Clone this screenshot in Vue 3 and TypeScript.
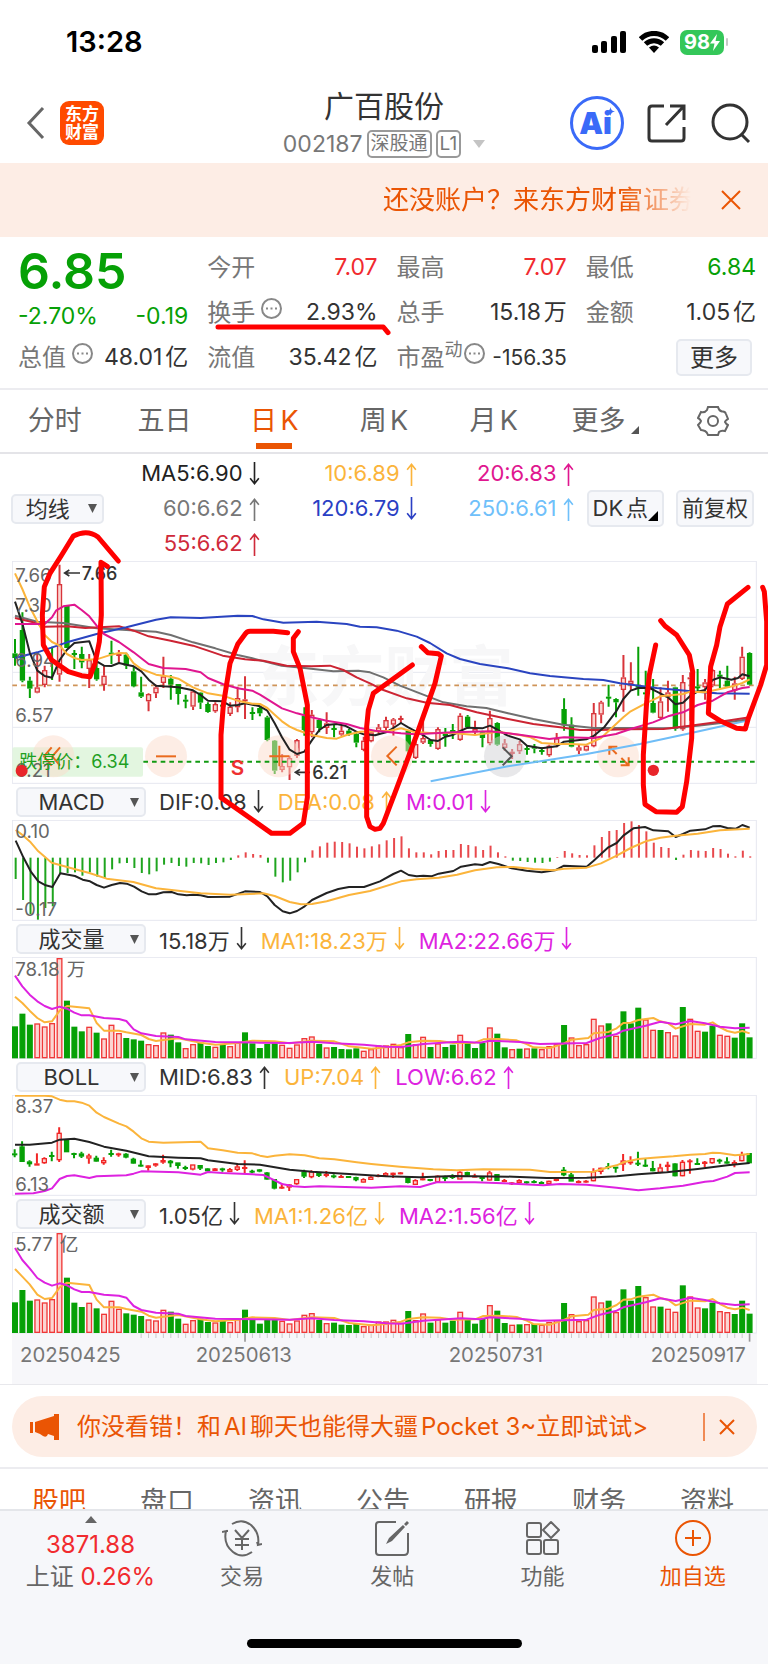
<script setup lang="ts">
import { ref } from 'vue'

type Candle = [up: number, high: number, top: number, bottom: number, low: number]

// Charts use a drawing grid of three units per CSS pixel.
const STEP = 22.26
const barX = (i: number): number => 45 + STEP * i

const candles: Candle[] = [
  [0, 255, 298, 312, 335], [0, 175, 228, 380, 385], [0, 368, 380, 404, 432], [1, 295, 400, 416, 418], [1, 335, 348, 393, 400],
  [0, 278, 315, 320, 378], [1, 32, 90, 362, 383], [0, 155, 155, 282, 282], [0, 288, 297, 301, 345], [0, 278, 300, 325, 343],
  [1, 300, 318, 345, 402], [0, 318, 342, 376, 380], [1, 335, 365, 393, 410], [0, 260, 296, 300, 330], [1, 288, 300, 305, 330],
  [0, 296, 302, 335, 345], [0, 338, 352, 397, 400], [0, 368, 415, 428, 432], [1, 418, 420, 442, 472], [1, 392, 400, 418, 432],
  [1, 308, 367, 387, 402], [0, 363, 374, 392, 437], [0, 390, 390, 420, 452], [0, 422, 437, 441, 463], [1, 410, 412, 458, 468],
  [0, 415, 416, 446, 465], [0, 445, 450, 474, 476], [1, 445, 450, 472, 476], [0, 440, 452, 458, 480], [1, 445, 458, 480, 486],
  [1, 398, 432, 460, 475], [1, 367, 436, 440, 495], [0, 460, 474, 480, 498], [0, 455, 462, 478, 487], [0, 485, 490, 558, 562],
  [0, 558, 560, 650, 660], [1, 600, 636, 648, 655], [1, 605, 612, 640, 678], [1, 555, 558, 606, 612], [0, 460, 485, 528, 545],
  [1, 468, 482, 535, 550], [0, 492, 498, 522, 535], [1, 475, 508, 522, 540], [0, 510, 522, 526, 550], [1, 515, 530, 542, 545],
  [0, 525, 530, 540, 545], [0, 532, 540, 566, 580], [1, 548, 560, 588, 592], [1, 530, 535, 562, 565], [1, 510, 520, 532, 540],
  [1, 488, 498, 522, 535], [1, 492, 496, 512, 545], [1, 485, 492, 498, 508], [0, 530, 530, 592, 600], [1, 560, 570, 612, 615],
  [1, 492, 552, 566, 570], [0, 555, 558, 570, 578], [1, 520, 525, 585, 587], [0, 522, 540, 544, 578], [0, 510, 528, 532, 555],
  [1, 478, 485, 558, 560], [0, 483, 488, 520, 525], [1, 500, 525, 535, 540], [0, 530, 535, 552, 580], [1, 470, 492, 568, 574],
  [0, 505, 507, 572, 575], [1, 555, 568, 582, 590], [1, 585, 593, 600, 615], [1, 560, 570, 592, 600], [0, 575, 582, 588, 602],
  [0, 570, 578, 584, 598], [0, 580, 588, 594, 602], [1, 572, 575, 604, 608], [1, 537, 553, 572, 580], [0, 433, 465, 514, 530],
  [0, 490, 512, 578, 580], [1, 570, 580, 590, 600], [1, 570, 575, 590, 592], [1, 447, 477, 577, 580], [1, 440, 445, 482, 508],
  [0, 392, 428, 432, 458], [0, 433, 435, 445, 490], [1, 303, 370, 408, 473], [1, 325, 380, 390, 410], [0, 278, 395, 400, 425],
  [0, 350, 415, 420, 435], [0, 375, 447, 476, 478], [1, 400, 442, 492, 497], [1, 380, 415, 430, 473], [0, 398, 400, 524, 530],
  [1, 363, 384, 526, 530], [1, 355, 370, 376, 500], [0, 345, 397, 401, 412], [1, 375, 385, 400, 437], [1, 345, 348, 395, 400],
  [0, 350, 362, 366, 402], [0, 335, 380, 398, 402], [1, 368, 388, 410, 437], [1, 278, 308, 375, 378], [0, 295, 297, 392, 394],
]

const bollY = (y: number): number => Math.round(222 + 0.2964 * (y - 90))
const bollCandles: Candle[] = candles.map(([u, h, t, b, l]) => [u, bollY(h), bollY(t), bollY(b), bollY(l)])

// One letter per trading day: r = rising, g = falling.
const volumeColors =
  'gggrrrrgggrgrrrgggrrrggrrggrgrrggggg' + 'rrrrrgrggggrrrrrrgrrgrgg' + 'rgggrggrgrgrrrgrrrrrgrgggrrgrrgrrggrrg'
const volumeTops: number[] = [
  727, 689, 722, 718, 727, 717, 522, 650, 728, 742, 728, 746, 763, 722, 747, 762, 766, 770, 780, 783,
  745, 752, 775, 792, 780, 775, 786, 788, 780, 786, 776, 745, 778, 792, 780, 778, 782, 791, 781, 762,
  757, 780, 790, 789, 795, 796, 793, 800, 795, 784, 784, 779, 789, 750, 780, 758, 789, 778, 789, 782,
  752, 777, 792, 777, 730, 749, 790, 795, 794, 793, 793, 795, 786, 780, 723, 760, 783, 780, 704, 724,
  718, 755, 682, 718, 671, 706, 737, 738, 744, 754, 669, 704, 740, 743, 725, 752, 755, 761, 718, 760,
]
interface Bar { x: number; y: number; h: number; up: boolean }
const isUp = (i: number): boolean => volumeColors[i] === 'r'
const volumeBars: Bar[] = volumeTops.map((y, i) => ({ x: barX(i), y, h: 822 - y, up: isUp(i) }))
const amountFactor = (i: number): number => (i === 6 ? 0.997 : i < 20 ? 0.96 : i < 78 ? 0.9 : 0.925)
const amountBars: Bar[] = volumeTops.map((y, i) => {
  const h = Math.round((822 - y) * amountFactor(i))
  return { x: barX(i), y: 821 - h, h, up: isUp(i) }
})

const macdEnds: number[] = [
  285, 348, 390, 407, 372, 367, 268, 267, 265, 275, 265, 278, 282, 256, 238, 237, 252, 267, 271, 262,
  242, 237, 246, 248, 237, 238, 243, 237, 235, 228, 214, 205, 210, 213, 236, 278, 295, 290, 265, 235,
  199, 187, 176, 173, 174, 178, 188, 193, 187, 181, 169, 162, 157, 193, 205, 205, 211, 201, 198, 198,
  180, 183, 187, 198, 185, 205, 217, 230, 231, 234, 236, 237, 233, 219, 201, 208, 213, 214, 184, 159,
  141, 138, 117, 112, 123, 142, 176, 189, 192, 228, 212, 198, 200, 201, 192, 195, 209, 217, 200, 217,
]

interface Line { color: string; points: string }
const maLines: Line[] = [
  { color: '#6fbdf7', points: '1292,682 1524,637 1760,600 1920,570 2060,540 2249,498' },
  { color: '#707070', points: '45,185 112,203 190,207 290,223 468,233 512,243 579,265 646,283 713,303 757,313 845,335 920,343 1000,352 1075,350 1110,355 1150,370 1200,395 1260,418 1330,445 1400,457 1459,462 1524,478 1600,495 1690,512 1780,522 1880,522 2010,523 2093,515 2182,505 2249,495' },
  { color: '#cc2433', points: '45,192 100,205 134,218 201,217 256,222 357,217 401,230 446,247 512,260 579,275 624,290 668,305 735,316 790,320 860,335 935,337 990,335 1030,348 1070,370 1110,388 1150,408 1220,433 1280,446 1350,453 1430,475 1524,495 1600,510 1680,520 1740,528 1800,528 1880,526 1990,525 2070,515 2160,503 2249,490' },
  { color: '#2a44c0', points: '45,312 112,295 201,265 290,240 379,220 468,197 512,190 602,192 713,185 757,186 790,196 850,206 950,203 1040,210 1080,218 1130,220 1190,230 1250,248 1290,267 1340,298 1380,315 1440,330 1524,343 1590,358 1650,366 1750,375 1810,378 1860,388 1970,402 2090,413 2150,418 2249,419' },
  { color: '#222222', points: '45,143 67,208 89,295 112,350 134,366 156,371 179,318 201,287 223,267 268,262 290,322 312,335 334,336 357,327 379,332 401,337 424,352 446,377 468,395 490,397 535,400 579,409 602,423 624,440 668,442 690,455 713,453 735,448 757,452 780,457 802,470 824,508 846,550 869,587 891,600 913,593 935,560 958,528 980,513 1010,510 1035,515 1069,533 1091,541 1125,544 1158,535 1180,522 1203,507 1225,520 1247,532 1269,543 1292,558 1314,561 1336,548 1358,543 1381,531 1403,521 1447,523 1470,515 1492,527 1514,540 1524,545 1559,556 1581,575 1625,583 1670,577 1692,563 1759,556 1781,546 1814,518 1848,473 1870,435 1892,410 1915,402 1949,402 1969,412 2004,430 2026,451 2049,446 2071,425 2093,413 2115,408 2138,378 2160,370 2194,377 2214,372 2227,361 2249,367' },
  { color: '#fbb43b', points: '45,58 67,105 89,158 112,202 134,243 156,264 179,275 201,300 223,312 245,318 290,316 334,302 357,297 379,298 401,328 424,345 468,362 512,368 535,374 579,400 624,418 668,425 713,440 757,449 780,450 802,462 824,482 846,502 869,518 891,528 935,543 980,552 1010,554 1040,543 1080,533 1125,532 1170,530 1203,523 1240,533 1290,537 1358,537 1425,543 1492,533 1559,543 1592,550 1625,567 1670,570 1714,570 1759,572 1803,552 1825,532 1870,490 1892,472 1937,448 1981,427 2026,422 2049,420 2071,413 2115,415 2160,405 2204,395 2227,387 2249,376' },
  { color: '#e0168f', points: '45,210 134,210 156,190 168,170 190,157 223,152 245,168 268,187 290,215 312,240 357,264 401,295 446,330 490,342 557,345 602,355 624,372 668,390 713,403 757,410 780,422 846,463 891,478 935,490 980,500 1040,510 1080,522 1125,530 1203,538 1247,541 1358,535 1470,532 1559,542 1648,555 1692,550 1781,552 1848,540 1892,525 1959,505 2004,487 2049,475 2093,453 2138,440 2182,415 2227,402 2249,399' },
]

const macdLines: Line[] = [
  { color: '#222222', points: '47,170 70,220 92,262 115,292 137,304 157,309 181,268 225,276 248,287 270,292 290,303 312,311 335,303 360,297 380,299 402,308 425,322 447,331 468,331 490,325 515,324 535,331 560,334 580,332 602,334 624,339 690,338 735,322 780,324 802,337 824,363 848,382 869,388 891,381 914,367 936,348 980,327 1015,315 1047,309 1092,309 1140,292 1180,270 1203,260 1226,273 1250,277 1270,275 1294,277 1316,269 1360,261 1383,248 1425,241 1447,243 1470,234 1495,240 1535,253 1580,260 1625,265 1665,259 1692,245 1760,248 1781,230 1803,210 1825,190 1850,177 1870,155 1900,133 1935,129 1960,139 2005,142 2027,159 2049,150 2071,140 2115,136 2138,127 2160,126 2182,132 2208,134 2227,123 2249,131' },
  { color: '#fbb43b', points: '47,138 70,155 92,175 115,202 155,236 223,255 268,267 320,284 400,294 468,313 535,320 602,328 690,332 790,328 824,336 869,354 903,361 936,360 980,352 1047,333 1110,321 1203,292 1250,286 1316,281 1371,272 1425,259 1490,250 1540,249 1600,255 1660,259 1692,254 1760,251 1803,238 1850,215 1892,192 1937,172 1981,161 2027,155 2093,149 2160,139 2249,134' },
]

const volumeLines: Line[] = [
  { color: '#fbb43b', points: '45,638 67,657 89,680 112,702 134,715 156,712 179,680 201,666 268,673 290,717 312,740 357,740 379,745 424,753 446,765 468,771 490,768 535,763 602,776 646,782 713,777 757,770 824,772 869,778 936,770 1003,772 1047,787 1114,794 1158,790 1203,783 1225,775 1270,770 1320,771 1360,777 1425,776 1450,766 1495,765 1550,769 1580,780 1600,790 1650,792 1692,778 1714,767 1765,762 1781,748 1825,744 1850,733 1870,717 1892,716 1915,708 1960,702 1981,712 2005,718 2027,734 2071,720 2115,722 2138,715 2160,730 2182,741 2205,746 2227,741 2249,748' },
  { color: '#dd22e0', points: '45,575 67,607 89,632 112,652 134,666 156,675 179,668 201,674 223,686 245,694 268,694 312,702 357,705 379,711 401,736 424,748 468,756 535,759 557,766 646,774 780,776 869,777 936,773 1003,778 1092,782 1158,788 1203,789 1270,780 1350,775 1383,773 1440,776 1470,770 1560,774 1620,780 1760,777 1800,762 1850,750 1870,740 1937,725 1981,713 2027,721 2071,711 2115,718 2160,728 2205,733 2249,731' },
]
const amountLines: Line[] = volumeLines.map((line) => ({
  color: line.color,
  points: line.points
    .split(' ')
    .map((p) => {
      const [x, y] = p.split(',').map(Number)
      const dy = x < 60 ? -8 : x < 90 ? -4 : 5
      return `${x},${y + dy}`
    })
    .join(' '),
}))

const bollLines: Line[] = [
  { color: '#fbb43b', points: '45,110 134,110 156,112 179,122 201,127 223,127 245,131 268,140 290,161 312,174 357,194 379,202 401,218 424,238 446,248 490,251 602,248 624,268 668,274 713,281 757,283 780,290 802,294 824,290 869,286 914,289 958,298 1003,301 1070,310 1114,315 1200,323 1300,331 1370,334 1450,331 1590,332 1650,339 1780,338 1825,325 1850,319 1870,310 1915,300 1960,296 2020,292 2071,287 2115,285 2138,281 2160,282 2205,289 2249,285' },
  { color: '#222222', points: '45,257 89,257 156,251 179,242 223,239 268,249 312,263 379,275 446,292 535,296 602,298 624,304 713,315 780,317 869,332 936,338 1047,345 1158,352 1260,355 1360,351 1540,353 1640,357 1760,356 1850,352 1915,346 2000,340 2093,330 2182,319 2249,312' },
  { color: '#dd22e0', points: '45,404 100,403 134,396 156,388 179,360 201,351 223,349 268,357 290,352 379,349 401,344 424,337 535,340 602,347 624,339 668,342 757,346 790,348 824,364 846,375 880,382 914,384 958,382 1114,386 1200,382 1260,384 1310,370 1425,370 1540,374 1630,379 1680,375 1760,377 1850,386 1915,394 1980,388 2049,380 2115,368 2140,366 2182,353 2205,342 2249,340' },
]

const priceLabels = [
  { y: 84, text: '7.66' }, { y: 173, text: '7.30' }, { y: 340, text: '6.94' }, { y: 505, text: '6.57' }, { y: 670, text: '6.21' },
]
const ticks = Array.from({ length: 83 }, (_, k) => k + 17)
const dates = [
  { x: 60, text: '20250425' }, { x: 587, text: '20250613' }, { x: 1346, text: '20250731' }, { x: 1952, text: '20250917' },
]

const periods = ['分时', '五日', '日K', '周K', '月K', '更多']
const activePeriod = ref('日K')

const averages = [
  { text: 'MA5:6.90', dir: 'down', tone: 'ink' }, { text: '10:6.89', dir: 'up', tone: 'gold' }, { text: '20:6.83', dir: 'up', tone: 'pink' },
  { text: '60:6.62', dir: 'up', tone: 'gray' }, { text: '120:6.79', dir: 'down', tone: 'navy' }, { text: '250:6.61', dir: 'up', tone: 'sky' },
  { text: '55:6.62', dir: 'up', tone: 'crimson' },
]

const indicators = ['MACD', '成交量', 'BOLL', '成交额']
const macdPick = ref('MACD')
const volumePick = ref('成交量')
const bollPick = ref('BOLL')
const amountPick = ref('成交额')
const overlayPick = ref('均线')

const sections = ['股吧', '盘口', '资讯', '公告', '研报', '财务', '资料']
const arrowPath = (dir: string): string => (dir === 'up' ? 'M6 22V2M2 7L6 2L10 7' : 'M6 0V20M2 15L6 20L10 15')
</script>

<template>
  <div class="page">
    <div class="status">
      <span class="clock">13:28</span>
      <span class="status-icons">
        <svg width="35" height="22" viewBox="0 0 35 22"><rect x="0" y="14" width="6" height="8" rx="2" /><rect x="9" y="10" width="6" height="12" rx="2" /><rect x="19" y="5" width="6" height="17" rx="2" /><rect x="28" y="0" width="6" height="22" rx="2" /></svg>
        <svg class="wifi" width="30" height="22" viewBox="0 0 30 22"><path d="M1.500 8C9 0.500 21 0.500 28.500 8" /><path d="M6.500 13C11.500 8.500 18.500 8.500 23.500 13" /><path class="solid" d="M10 16.500Q15 12.500 20 16.500L15 22Z" /></svg>
        <span class="battery">98<svg width="10" height="17" viewBox="0 0 10 17"><path d="M7 0L0 9.500H4.500L3 17L10 7H5.500Z" /></svg></span><i class="battery-tip"></i>
      </span>
    </div>

    <header class="header">
      <div class="header-left">
        <button class="plain" aria-label="返回"><svg width="20" height="34" viewBox="0 0 20 34"><path d="M17 2L3 17L17 32" fill="none" stroke="#666" stroke-width="3" /></svg></button>
        <a class="brand" href="#">东方<br />财富</a>
      </div>
      <div class="title">
        <h1>广百股份</h1>
        <p><span class="code">002187</span><span class="tag">深股通</span><span class="tag">L1</span><svg width="12" height="8" viewBox="0 0 12 8"><path d="M0 0H12L6 8Z" fill="#c4c4c4" /></svg></p>
      </div>
      <div class="header-right">
        <button class="ai" aria-label="Ai"><span>Ai</span><svg width="9" height="9" viewBox="0 0 10 10"><path d="M5 0Q5.500 4.500 10 5Q5.500 5.500 5 10Q4.500 5.500 0 5Q4.500 4.500 5 0Z" /></svg></button>
        <button class="plain" aria-label="分享"><svg width="40" height="40" viewBox="0 0 40 40" fill="none" stroke="#333" stroke-width="3"><path d="M17 3H5Q2 3 2 6V35Q2 38 5 38H34Q37 38 37 35V24M23 3H37V17M37 3L19 22" /></svg></button>
        <button class="plain" aria-label="搜索"><svg width="42" height="42" viewBox="0 0 42 42" fill="none" stroke="#333" stroke-width="3"><circle cx="20" cy="20" r="17" /><path d="M31 32L39 40" /></svg></button>
      </div>
    </header>

    <div class="banner">
      <a class="banner-text" href="#">还没账户？来东方财富证券</a>
      <button class="plain" aria-label="关闭"><svg width="20" height="20" viewBox="0 0 20 20"><path d="M1 1L19 19M19 1L1 19" fill="none" stroke="#ea5504" stroke-width="2" /></svg></button>
    </div>

    <section class="quote">
      <div class="price">
        <strong>6.85</strong>
        <div class="pair green"><span>-2.70%</span><span>-0.19</span></div>
      </div>
      <div class="pair"><span class="k">今开</span><span class="red">7.07</span></div>
      <div class="pair"><span class="k">最高</span><span class="red">7.07</span></div>
      <div class="pair"><span class="k">最低</span><span class="green">6.84</span></div>
      <div class="pair"><span class="k">换手<svg class="dots" width="21" height="21" viewBox="0 0 21 21"><circle cx="10.500" cy="10.500" r="9.500" /><path d="M5 10.500H7M9.500 10.500H11.500M14 10.500H16" /></svg></span><span>2.93%</span></div>
      <div class="pair"><span class="k">总手</span><span>15.18万</span></div>
      <div class="pair"><span class="k">金额</span><span>1.05亿</span></div>
      <div class="pair"><span class="k">总值<svg class="dots" width="21" height="21" viewBox="0 0 21 21"><circle cx="10.500" cy="10.500" r="9.500" /><path d="M5 10.500H7M9.500 10.500H11.500M14 10.500H16" /></svg></span><span>48.01亿</span></div>
      <div class="pair"><span class="k">流值</span><span>35.42亿</span></div>
      <div class="pair"><span class="k">市盈<sup>动</sup><svg class="dots" width="21" height="21" viewBox="0 0 21 21"><circle cx="10.500" cy="10.500" r="9.500" /><path d="M5 10.500H7M9.500 10.500H11.500M14 10.500H16" /></svg></span><span class="small">-156.35</span></div>
      <div class="more"><button class="chip">更多</button></div>
    </section>

    <nav class="periods">
      <button v-for="p in periods" :key="p" :class="{ active: p === activePeriod }" @click="activePeriod = p">
        {{ p }}<svg v-if="p === '更多'" class="corner" width="8" height="8" viewBox="0 0 8 8"><path d="M8 0V8H0Z" /></svg>
      </button>
      <button aria-label="设置"><svg width="32" height="32" viewBox="0 0 32 32" fill="none" stroke="#666" stroke-width="2"><path d="M11 2H21Q22 6 25 6.500Q28 6 29 9L31 14Q28 16 28 17Q29 19 31 20L28 26Q24 25 22 27Q21 30 21 30H11Q10 27 8 26Q5 25 4 25L1 20Q4 17 4 16Q3 14 1 13L4 7Q8 8 10 5Z" /><circle cx="16" cy="16" r="5" /></svg></button>
    </nav>

    <section class="averages">
      <label class="picker overlay"><select v-model="overlayPick" aria-label="主图指标"><option>均线</option></select><svg width="9" height="9" viewBox="0 0 9 9"><path d="M0 0H9L4.500 9Z" /></svg></label>
      <div class="legend">
        <span v-for="a in averages" :key="a.text" :class="a.tone">{{ a.text }}<svg class="arrow" viewBox="0 0 12 22"><path :d="arrowPath(a.dir)" /></svg></span>
      </div>
      <div class="tools">
        <button class="chip dk">DK点<svg width="10" height="10" viewBox="0 0 10 10"><path d="M10 0V10H0Z" /></svg></button>
        <button class="chip">前复权</button>
      </div>
    </section>

    <main class="charts">
      <svg class="chart" viewBox="36 21 2235 669">
        <rect class="frame" x="37" y="22" width="2232" height="666" />
        <path class="grid" d="M37 190H2269M37 355H2269M37 520H2269" />
        <text class="watermark" x="765" y="438">东方财富</text>
        <path class="dash brown" d="M37 394H2269" />
        <g v-for="(c, i) in candles" :key="i" :class="c[0] ? 'up' : 'down'">
          <path class="wick" :d="`M${barX(i)} ${c[1]}V${c[2]}M${barX(i)} ${c[3]}V${c[4]}`" />
          <rect :x="barX(i) - 6" :y="c[2] + 2" width="12" :height="Math.max(2, c[3] - c[2] - 4)" />
        </g>
        <rect class="limit-bg" x="37" y="580" width="392" height="88" rx="6" />
        <g class="control"><circle cx="160" cy="607" r="63" /><path d="M155 580L132 607L155 635M180 580L157 607L180 635" /></g>
        <g class="control"><circle cx="498" cy="607" r="63" /><path d="M468 607H528" /></g>
        <g class="control"><circle cx="837" cy="607" r="63" /><path d="M808 607H868M838 575V637" /></g>
        <g class="control"><circle cx="1176" cy="607" r="63" /><path d="M1190 578L1162 606L1190 634" /></g>
        <g class="control muted"><circle cx="1515" cy="607" r="63" /><path d="M1508 580L1535 607L1508 634" /></g>
        <g class="control"><circle cx="1854" cy="607" r="63" /><path d="M1828 602V578H1852M1828 578L1850 600M1862 634H1886V610M1886 634L1864 612" /></g>
        <path class="dash green-line" d="M430 623H2269" />
        <polyline v-for="l in maLines" :key="l.color" class="line" :points="l.points" :stroke="l.color" />
        <text v-for="p in priceLabels" :key="p.text" class="label" x="46" :y="p.y">{{ p.text }}</text>
        <text class="limit" x="58" y="642">跌停价：6.34</text>
        <circle class="dot" cx="65" cy="650" r="18" />
        <circle class="dot" cx="1960" cy="649" r="17" />
        <text class="mark" x="692" y="662">S</text>
        <path class="pointer" d="M240 57H194M208 48L194 57L208 66M930 655H886M900 646L886 655L900 664" />
        <text class="callout" x="245" y="77">7.66</text>
        <text class="callout" x="937" y="675">6.21</text>
      </svg>

      <div class="row">
        <label class="picker"><select v-model="macdPick" aria-label="副图一"><option v-for="o in indicators" :key="o">{{ o }}</option></select><svg width="9" height="9" viewBox="0 0 9 9"><path d="M0 0H9L4.500 9Z" /></svg></label>
        <span class="ink">DIF:0.08<svg class="arrow" viewBox="0 0 12 22"><path :d="arrowPath('down')" /></svg></span>
        <span class="gold">DEA:0.08<svg class="arrow" viewBox="0 0 12 22"><path :d="arrowPath('up')" /></svg></span>
        <span class="violet">M:0.01<svg class="arrow" viewBox="0 0 12 22"><path :d="arrowPath('down')" /></svg></span>
      </div>
      <svg class="chart" viewBox="36 108 2235 303">
        <rect class="frame" x="37" y="109" width="2232" height="300" />
        <path v-for="(y, i) in macdEnds" :key="i" class="stick" :class="y < 221 ? 'rise' : 'fall'" :d="`M${barX(i) + 2} 221V${y}`" />
        <polyline v-for="l in macdLines" :key="l.color" class="line" :points="l.points" :stroke="l.color" />
        <text class="label" x="46" y="163">0.10</text>
        <text class="label" x="46" y="397">-0.17</text>
      </svg>

      <div class="row">
        <label class="picker"><select v-model="volumePick" aria-label="副图二"><option v-for="o in indicators" :key="o">{{ o }}</option></select><svg width="9" height="9" viewBox="0 0 9 9"><path d="M0 0H9L4.500 9Z" /></svg></label>
        <span class="ink">15.18万<svg class="arrow" viewBox="0 0 12 22"><path :d="arrowPath('down')" /></svg></span>
        <span class="gold">MA1:18.23万<svg class="arrow" viewBox="0 0 12 22"><path :d="arrowPath('down')" /></svg></span>
        <span class="violet">MA2:22.66万<svg class="arrow" viewBox="0 0 12 22"><path :d="arrowPath('down')" /></svg></span>
      </div>
      <svg class="chart" viewBox="36 519 2235 306">
        <rect class="frame" x="37" y="520" width="2232" height="303" />
        <rect v-for="(b, i) in volumeBars" :key="i" class="bar" :class="b.up ? 'up' : 'down'" :x="b.x - 7" :y="b.y + 2" width="14" :height="b.h - 3" />
        <polyline v-for="l in volumeLines" :key="l.color" class="line" :points="l.points" :stroke="l.color" />
        <text class="label" x="46" y="575">78.18万</text>
      </svg>

      <div class="row">
        <label class="picker"><select v-model="bollPick" aria-label="副图三"><option v-for="o in indicators" :key="o">{{ o }}</option></select><svg width="9" height="9" viewBox="0 0 9 9"><path d="M0 0H9L4.500 9Z" /></svg></label>
        <span class="ink">MID:6.83<svg class="arrow" viewBox="0 0 12 22"><path :d="arrowPath('up')" /></svg></span>
        <span class="gold">UP:7.04<svg class="arrow" viewBox="0 0 12 22"><path :d="arrowPath('up')" /></svg></span>
        <span class="violet">LOW:6.62<svg class="arrow" viewBox="0 0 12 22"><path :d="arrowPath('up')" /></svg></span>
      </div>
      <svg class="chart" viewBox="36 108 2235 303">
        <rect class="frame" x="37" y="109" width="2232" height="300" />
        <g v-for="(c, i) in bollCandles" :key="i" class="bold" :class="c[0] ? 'up' : 'down'">
          <path class="wick" :d="`M${barX(i) - 1} ${c[1]}V${c[2]}M${barX(i) - 1} ${c[3]}V${c[4]}`" />
          <rect :x="barX(i) - 7" :y="c[2] + 1" width="12" :height="Math.max(2, c[3] - c[2] - 2)" />
        </g>
        <polyline v-for="l in bollLines" :key="l.color" class="line" :points="l.points" :stroke="l.color" />
        <text class="label" x="46" y="163">8.37</text>
        <text class="label" x="46" y="397">6.13</text>
      </svg>

      <div class="row">
        <label class="picker"><select v-model="amountPick" aria-label="副图四"><option v-for="o in indicators" :key="o">{{ o }}</option></select><svg width="9" height="9" viewBox="0 0 9 9"><path d="M0 0H9L4.500 9Z" /></svg></label>
        <span class="ink">1.05亿<svg class="arrow" viewBox="0 0 12 22"><path :d="arrowPath('down')" /></svg></span>
        <span class="gold">MA1:1.26亿<svg class="arrow" viewBox="0 0 12 22"><path :d="arrowPath('down')" /></svg></span>
        <span class="violet">MA2:1.56亿<svg class="arrow" viewBox="0 0 12 22"><path :d="arrowPath('down')" /></svg></span>
      </div>
      <svg class="chart" viewBox="36 519 2235 456">
        <rect class="axis-bg" x="36" y="823" width="2235" height="152" />
        <rect class="frame" x="37" y="520" width="2232" height="302" />
        <path v-for="t in ticks" :key="t" class="tick" :class="{ major: t % 34 === 31 }" :d="`M${barX(t)} 823V${t % 34 === 31 ? 848 : 837}`" />
        <rect v-for="(b, i) in amountBars" :key="i" class="bar" :class="b.up ? 'up' : 'down'" :x="b.x - 7" :y="b.y + 2" width="14" :height="b.h - 3" />
        <polyline v-for="l in amountLines" :key="l.color" class="line" :points="l.points" :stroke="l.color" />
        <text class="label" x="46" y="575">5.77亿</text>
        <text v-for="d in dates" :key="d.text" class="date" :x="d.x" y="908">{{ d.text }}</text>
      </svg>
    </main>

    <section class="promo">
      <div class="pill">
        <svg width="30" height="26" viewBox="0 0 30 26" fill="#ea5504"><path d="M0 8H3V19H0ZM5 8L24 2V0H29V26H24V22L18 20Q17 24 13 22L10 20L5 18Z" /></svg>
        <a href="#">你没看错！和AI聊天也能得大疆Pocket 3~立即试试&gt;</a>
        <i></i>
        <button class="plain" aria-label="关闭"><svg width="16" height="16" viewBox="0 0 16 16"><path d="M1 1L15 15M15 1L1 15" fill="none" stroke="#ea5504" stroke-width="2" /></svg></button>
      </div>
    </section>

    <nav class="sections">
      <a v-for="(s, i) in sections" :key="s" href="#" :class="{ active: i === 0 }">{{ s }}</a>
    </nav>

    <footer class="dock">
      <div class="dock-items">
        <a class="index" href="#">
          <svg width="12" height="7" viewBox="0 0 12 7"><path d="M6 0L12 7H0Z" fill="#666" /></svg>
          <span class="red">3871.88</span>
          <span>上证 <b class="red">0.26%</b></span>
        </a>
        <button><svg width="40" height="38" viewBox="0 0 40 38"><path d="M10 5Q20 -1 29 6Q38 14 36 26L40 25M30 33Q20 40 11 33Q1 25 4 12L0 13M4 12L6 12M36 26L35 23M13 11L20 19L27 11M13 20H27M13 26H27M20 19V31" /></svg>交易</button>
        <button><svg width="40" height="38" viewBox="0 0 40 38"><path d="M24 3H7Q4 3 4 6V33Q4 36 7 36H32Q36 36 36 32V14" /><path class="pen" d="M14 25L17 19L31 6L33 8L20 22ZM32 5L35 2L37 4L34 7Z" /></svg>发帖</button>
        <button><svg width="40" height="38" viewBox="0 0 40 38"><rect x="4" y="4" width="14" height="14" rx="2" /><rect x="4" y="21" width="14" height="14" rx="2" /><rect x="21" y="21" width="14" height="14" rx="2" /><path d="M28 3L36 11L28 19L20 11Z" stroke-linejoin="round" /></svg>功能</button>
        <button class="add"><svg width="40" height="38" viewBox="0 0 40 38"><circle cx="20" cy="19" r="17" /><path d="M12 19H28M20 11V27" /></svg>加自选</button>
      </div>
      <div class="home"></div>
    </footer>

    <svg class="scribble" viewBox="0 0 2304 4992" aria-hidden="true">
      <path d="M654 981H1150L1164 998" />
      <g transform="translate(0 1665)">
        <path d="M355 18L294 -54Q262 -78 220 -57L185 0L150 55L133 95L127 180L130 270L155 315L205 350L245 362L270 365L285 325L298 260L304 180L303 22L322 34" />
        <path d="M863 233L820 229H750Q740 229 735 238L713 268L690 325L670 450L663 540V728L815 835H870L910 805L922 728V450L912 400L900 340L880 290V250L895 230" />
        <path d="M1237 330L1120 415L1105 465L1100 515V785L1110 815L1125 823L1140 820L1150 805L1190 700L1250 540L1305 385L1324 303L1315 296L1283 293L1264 275" />
        <path d="M1967 270L1948 360L1940 440L1930 600V690L1935 748L1968 770L2030 772L2047 755L2060 680L2075 550L2078 350L2068 300L2030 240L1995 213L1982 197" />
        <path d="M2244 97L2182 147L2160 215L2150 270L2132 335L2125 475L2160 497L2210 520L2236 522L2245 490L2282 390L2300 330V200L2293 110L2288 97" />
      </g>
    </svg>
  </div>
</template>

<style>
body {
  background: #fff;
}
</style>

<style scoped>
.page {
  position: relative;
  overflow: hidden;
  font-family: Inter, 'Noto Sans CJK SC', sans-serif;
  font-size: 22px;
  text-autospace: normal;
  color: #333;
  background: #fff;
}
button, select {
  font: inherit;
  color: inherit;
}
a {
  color: inherit;
  text-decoration: none;
}
button {
  padding: 0;
  border: 0;
  background: none;
  cursor: pointer;
}
svg {
  display: block;
  flex: none;
}
.red { color: #f12b2f; }
.green { color: #06a006; }
.ink { color: #222; }
.gold { color: #fbb43b; }
.pink { color: #e0168f; }
.gray { color: #777; }
.navy { color: #2a3fc4; }
.sky { color: #6fc0fa; }
.crimson { color: #cf2a3a; }
.violet { color: #dd22e0; }

.status {
  display: flex;
  justify-content: space-between;
  align-items: center;
  padding: 22px 40px 20px 66px;
  line-height: 40px;
}
.clock {
  font-size: 29px;
  font-weight: 600;
  color: #000;
}
.status-icons {
  display: flex;
  align-items: center;
}
.wifi {
  margin: 0 11px 0 12px;
  fill: none;
  stroke: #000;
  stroke-width: 5;
}
.wifi .solid {
  fill: #000;
  stroke: none;
}
.battery {
  display: flex;
  align-items: center;
  justify-content: center;
  width: 44px;
  border-radius: 7px;
  background: #34c759;
  color: #fff;
  font-size: 20px;
  font-weight: 700;
  line-height: 25px;
}
.battery svg {
  fill: #fff;
}
.battery-tip {
  width: 2px;
  height: 8px;
  margin-left: 2px;
  border-radius: 1px;
  background: #c8c8c8;
}

.header {
  display: grid;
  grid-template-columns: 1fr auto 1fr;
  align-items: center;
  padding: 0 16px;
  height: 81px;
  box-sizing: border-box;
}
.header-left, .header-right {
  display: flex;
  align-items: center;
}
.header-left {
  gap: 14px;
  padding-left: 10px;
}
.header-right {
  justify-content: flex-end;
  gap: 23px;
}
.brand {
  padding: 4px 5px;
  border-radius: 9px;
  background: #ff4a00;
  color: #fff;
  font-size: 17px;
  font-weight: 600;
  line-height: 18px;
}
.title {
  text-align: center;
}
.title h1 {
  margin: 0;
  font-size: 30px;
  font-weight: 400;
  line-height: 42px;
}
.title p {
  display: flex;
  align-items: center;
  justify-content: center;
  gap: 4px;
  margin: 0;
  color: #777;
  font-size: 23px;
  line-height: 34px;
}
.title p svg {
  margin-left: 8px;
}
.tag {
  padding: 0 2px;
  border: 2px solid #999;
  border-radius: 5px;
  font-size: 19px;
  line-height: 24px;
}
.ai {
  display: flex;
  align-items: center;
  justify-content: center;
  width: 54px;
  height: 54px;
  box-sizing: border-box;
  border: 3px solid #3a6af8;
  border-radius: 50%;
  color: #3a6af8;
  font-size: 30px;
  font-weight: 900;
}
.ai svg {
  align-self: flex-start;
  margin: 8px 0 0 -6px;
  fill: #3a6af8;
}

.banner {
  display: flex;
  align-items: center;
  justify-content: flex-end;
  gap: 30px;
  padding: 0 27px 0 0;
  background: #fdede5;
  line-height: 74px;
}
.banner-text {
  width: 308px;
  overflow: hidden;
  white-space: nowrap;
  color: #ea5504;
  font-size: 26px;
  mask-image: linear-gradient(90deg, #000 240px, transparent 308px);
}

.quote {
  display: grid;
  grid-template-columns: repeat(4, 1fr);
  grid-auto-rows: 45px;
  column-gap: 19px;
  padding: 8px 12px 8px 18px;
  border-bottom: 2px solid #ececf0;
}
.price {
  grid-row: span 2;
}
.price strong {
  display: block;
  font-size: 50px;
  font-weight: 600;
  line-height: 53px;
  color: #06a006;
}
.pair {
  display: flex;
  align-items: center;
  justify-content: space-between;
  font-size: 23px;
  line-height: 45px;
  white-space: nowrap;
}
.price .pair {
  line-height: 37px;
}
.k {
  display: flex;
  align-items: center;
  color: #777;
  font-size: 24px;
}
.k sup {
  align-self: flex-start;
  font-size: 18px;
  line-height: 30px;
}
.dots {
  margin: 0 0 8px 6px;
  fill: none;
  stroke: #888;
  stroke-width: 2;
}
.k sup + .dots {
  margin-left: 1px;
}
.small {
  font-size: 21px;
}
.more {
  display: flex;
  align-items: center;
  justify-content: flex-end;
  padding-right: 4px;
}
.chip {
  padding: 0 4px;
  border: 2px solid #e6e9ef;
  border-radius: 5px;
  background: #f7f8fb;
  line-height: 33px;
  white-space: nowrap;
}
.more .chip {
  padding: 0 12px;
  font-size: 24px;
}

.periods {
  display: grid;
  grid-template-columns: repeat(7, 1fr);
  border-bottom: 2px solid #e4e4e8;
}
.periods button {
  display: flex;
  align-items: center;
  justify-content: center;
  color: #666;
  font-size: 27px;
  line-height: 62px;
}
.periods .active {
  color: #ea5504;
  background: linear-gradient(#ea5504, #ea5504) center bottom 3px / 36px 6px no-repeat;
}
.corner {
  margin: 18px -4px 0 6px;
  fill: #555;
}

.averages {
  display: flex;
  align-items: center;
  padding: 2px 14px 0 11px;
}
.picker {
  display: grid;
  grid-template-columns: 1fr 9px;
  align-items: center;
  width: 130px;
  padding-right: 5px;
  box-sizing: border-box;
  border: 2px solid #e6e9ef;
  border-radius: 5px;
  background: #f7f8fb;
  line-height: 26px;
}
.picker select {
  width: 100%;
  height: 26px;
  padding: 0 5px 0 0;
  border: 0;
  background: none;
  appearance: none;
  text-align: center;
  text-align-last: center;
  font-size: 22px;
  line-height: 26px;
}
.picker svg {
  fill: #555;
}
.picker.overlay {
  width: 94px;
}
.legend {
  display: grid;
  flex: 1;
  grid-template-columns: repeat(3, 157px);
  line-height: 35px;
}
.legend span, .row span {
  display: flex;
  align-items: center;
  gap: 5px;
  white-space: nowrap;
}
.legend span {
  justify-content: flex-end;
}
.arrow {
  width: 13px;
  height: 24px;
  fill: none;
  stroke: currentColor;
  stroke-width: 1.5;
}
.tools {
  display: flex;
  gap: 12px;
  margin-left: 12px;
}
.dk {
  display: flex;
  align-items: flex-end;
}
.dk svg {
  margin: 0 0 4px 0;
}

.charts {
  padding: 0 11px 0 12px;
}
.chart {
  width: 100%;
  height: auto;
}
.row {
  display: flex;
  align-items: center;
  gap: 13px;
  padding-left: 4px;
  height: 36px;
  font-size: 22px;
  text-autospace: no-autospace;
}
.row .ink { color: #333; }
.frame {
  fill: none;
  stroke: #e6e8f0;
  stroke-width: 3;
}
.grid {
  fill: none;
  stroke: #e6e8f0;
  stroke-width: 3;
}
.watermark {
  font-size: 194px;
  font-weight: 700;
  fill: #f7f7f8;
}
.dash {
  fill: none;
  stroke-width: 5;
  stroke-dasharray: 14 12;
}
.brown { stroke: #cf9458; }
.green-line {
  stroke: #129a12;
  stroke-width: 6;
}
.up rect, .bar.up {
  fill: #fbd5d2;
  stroke: #d8343a;
  stroke-width: 4;
}
.down rect, .bar.down {
  fill: #06a006;
  stroke: #06a006;
  stroke-width: 4;
}
.bar.up {
  stroke: #f03838;
}
.up .wick {
  stroke: #d8343a;
  stroke-width: 6;
}
.down .wick {
  stroke: #06a006;
  stroke-width: 6;
}
.bold.up rect, .bold.up .wick {
  stroke: #f22626;
}
.line {
  fill: none;
  stroke-width: 6;
  stroke-linejoin: round;
}
.label {
  font-size: 56px;
  fill: #666;
}
.date {
  font-size: 61px;
  fill: #777;
}
.callout {
  font-size: 54px;
  font-weight: 500;
  fill: #333;
}
.pointer {
  fill: none;
  stroke: #333;
  stroke-width: 5;
}
.limit-bg {
  fill: #def4da;
  opacity: 0.85;
}
.limit {
  font-size: 54px;
  fill: #1fa01f;
}
.mark {
  font-size: 62px;
  font-weight: 600;
  fill: #ee3030;
}
.dot { fill: #e8252a; }
.control circle {
  fill: #fbdccb;
  opacity: 0.5;
}
.control path {
  fill: none;
  stroke: #ea6a1e;
  stroke-width: 6;
}
.muted circle { fill: #d2d2d6; }
.muted path { stroke: #555; }
.stick { stroke-width: 6; }
.rise { stroke: #e8484c; }
.fall { stroke: #1fa51f; }
.axis-bg { fill: #f7f7fa; }
.tick {
  stroke: #c8c8cc;
  stroke-width: 3;
}
.major {
  stroke: #999;
  stroke-width: 5;
}

.promo {
  padding: 11px 11px 10px 12px;
  border-top: 1px solid #e8e8ec;
  border-bottom: 2px solid #ececf0;
}
.pill {
  display: flex;
  align-items: center;
  padding: 0 22px 0 18px;
  border-radius: 31px;
  background: #fdede5;
  color: #ea5504;
  font-size: 24px;
  line-height: 61px;
}
.pill a {
  flex: 1;
  margin-left: 17px;
  white-space: nowrap;
}
.pill i {
  width: 2px;
  height: 28px;
  margin-right: 14px;
  background: #f08a55;
}

.sections {
  display: grid;
  grid-template-columns: repeat(7, 1fr);
  height: 40px;
  padding: 0 7px 0 5px;
  overflow: hidden;
  color: #666;
  font-size: 27px;
  line-height: 66px;
  text-align: center;
}
.sections .active {
  color: #ea5504;
}

.dock {
  padding-bottom: 16px;
  border-top: 2px solid #e4e6ea;
  background: #f6f7fa;
}
.dock-items {
  display: grid;
  grid-template-columns: 167px repeat(4, 1fr);
  padding: 5px 0 46px;
}
.dock button, .index {
  display: flex;
  flex-direction: column;
  align-items: center;
  color: #666;
  font-size: 22px;
}
.dock button {
  gap: 2px;
  padding-top: 3px;
  line-height: 34px;
}
.dock button svg {
  fill: none;
  stroke: #666;
  stroke-width: 2;
}
.dock button .pen {
  fill: #666;
  stroke: none;
}
.dock .add {
  color: #ea5504;
}
.dock .add svg {
  stroke: #ea5504;
}
.index {
  padding-left: 14px;
  font-size: 24px;
  line-height: 32px;
}
.index svg {
  margin-bottom: 6px;
}
.index b {
  font-weight: 400;
}
.home {
  width: 275px;
  height: 9px;
  margin: 0 auto;
  border-radius: 5px;
  background: #000;
}

.scribble {
  position: absolute;
  top: 0;
  left: 0;
  width: 100%;
  height: auto;
  pointer-events: none;
  fill: none;
  stroke: #ff0000;
  stroke-width: 15;
  stroke-linecap: round;
  stroke-linejoin: round;
}
</style>
